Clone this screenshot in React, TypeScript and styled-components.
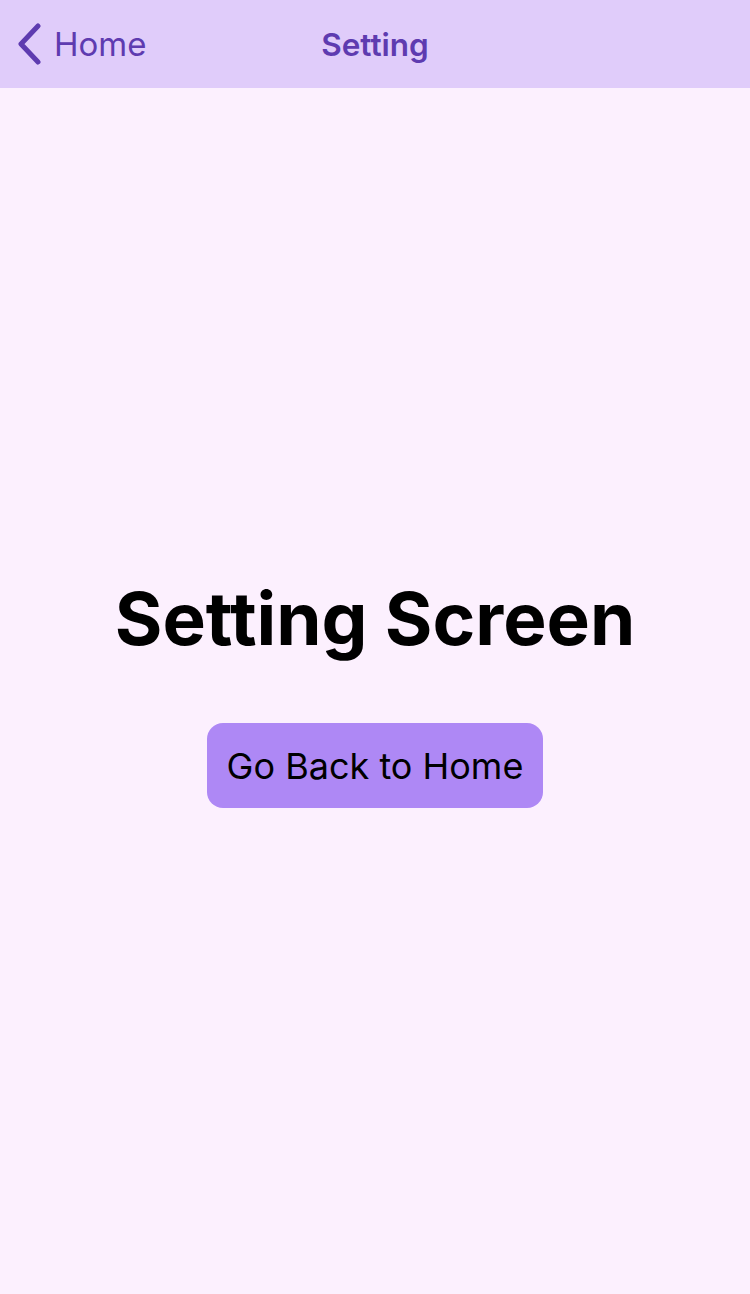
import React from "react";
import styled, { createGlobalStyle } from "styled-components";

const Global = createGlobalStyle`
  html, body { margin: 0; padding: 0; }
  body { font-family: Inter, "Noto Sans", sans-serif; background: #fcf0fe; }
  #root { min-height: 1294px; display: flex; flex-direction: column; }
`;

const Screen = styled.div`
  flex: 1;
  display: flex;
  flex-direction: column;
  background: #fcf0fe;
`;

const NavBar = styled.header`
  height: 88px;
  background: #e0ccfa;
  display: grid;
  grid-template-columns: 1fr auto 1fr;
  align-items: center;
  padding: 0 16px;
  box-sizing: border-box;
`;

const BackButton = styled.button`
  justify-self: start;
  display: flex;
  align-items: center;
  gap: 12px;
  background: none;
  border: none;
  padding: 0;
  color: #5e3bb0;
  font-family: Inter, sans-serif;
  font-size: 33px;
  cursor: pointer;
`;

const NavTitle = styled.h1`
  margin: 0;
  font-size: 31.5px;
  font-weight: 600;
  color: #5e3bb0;
`;

const Content = styled.main`
  flex: 1;
  display: flex;
  flex-direction: column;
  align-items: center;
  justify-content: center;
  gap: 60px;
`;

const Heading = styled.h2`
  margin: 0;
  font-size: 72.8px;
  font-weight: 700;
  color: #000;
`;

const ActionButton = styled.button`
  background: #ae88f5;
  border: none;
  border-radius: 16px;
  padding: 0 20px;
  height: 85px;
  font-family: Inter, sans-serif;
  font-size: 36px;
  color: #000;
  cursor: pointer;
`;

export default function App() {
  return (
    <>
      <Global />
      <Screen>
        <NavBar>
          <BackButton>
            <svg width="26" height="42" viewBox="0 0 26 42" fill="none">
              <path d="M22 3 L5 21 L22 39" stroke="#5e3bb0" strokeWidth="5" strokeLinecap="round" strokeLinejoin="round" />
            </svg>
            Home
          </BackButton>
          <NavTitle>Setting</NavTitle>
          <div />
        </NavBar>
        <Content>
          <Heading>Setting Screen</Heading>
          <ActionButton>Go Back to Home</ActionButton>
        </Content>
      </Screen>
    </>
  );
}
